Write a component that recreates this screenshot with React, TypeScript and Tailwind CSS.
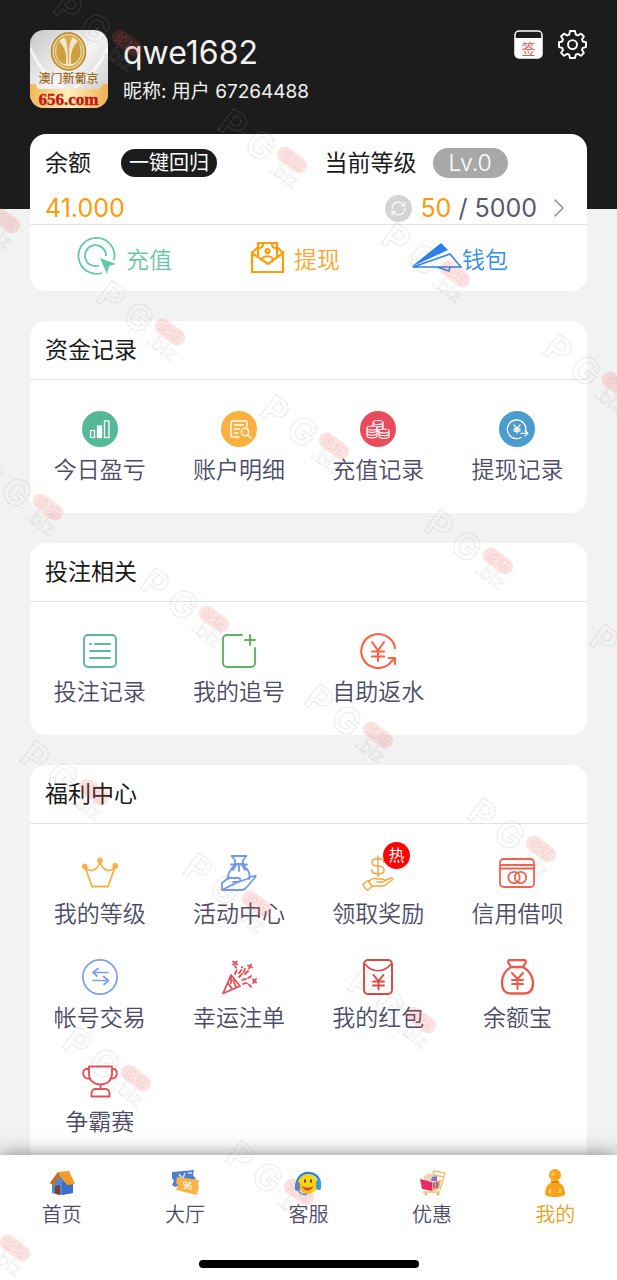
import { ReactNode } from 'react';
import { ChevronRight, RefreshCw } from 'lucide-react';

type Entry = { label: string; icon: ReactNode; hot?: boolean };

const svgProps = { width: 36, height: 36, viewBox: '0 0 36 36', fill: 'none', strokeLinecap: 'round', strokeLinejoin: 'round' } as const;

const funds: Entry[] = [
    {
        label: '今日盈亏',
        icon: (
            <svg {...svgProps}>
                <circle cx="18" cy="18" r="18" fill="#55b896" />
                <g stroke="#fff" strokeWidth="1.3" strokeLinecap="butt" strokeLinejoin="miter">
                    <rect x="8.5" y="19.5" width="4" height="7" />
                    <rect x="15.5" y="15" width="4" height="11.5" fill="#fff" />
                    <rect x="22.5" y="10" width="4.5" height="16.5" />
                </g>
            </svg>
        ),
    },
    {
        label: '账户明细',
        icon: (
            <svg {...svgProps}>
                <circle cx="18" cy="18" r="18" fill="#fcb040" />
                <g stroke="#fff" strokeWidth="1.4">
                    <path d="M26 16V11.500a1.500 1.500 0 0 0-1.500-1.500H11.500A1.500 1.500 0 0 0 10 11.500v13a1.500 1.500 0 0 0 1.500 1.500H18M13.500 14h9M13.500 18h5M13.500 22h3" />
                    <circle cx="24" cy="21" r="3.700" />
                    <path d="m27 24 3 3" />
                </g>
            </svg>
        ),
    },
    {
        label: '充值记录',
        icon: (
            <svg {...svgProps}>
                <circle cx="18" cy="18" r="18" fill="#ea4b5a" />
                <g stroke="#fff" strokeWidth="1.1" fill="#ea4b5a">
                    <path d="M13 11.500v9h10v-9" />
                    <path d="M13 14c1 2.500 9 2.500 10 0M13 17c1 2.500 9 2.500 10 0" />
                    <ellipse cx="18" cy="11.500" rx="5" ry="2" />
                    <path d="M7 17v8c1 2.500 9 2.500 10 0v-8" />
                    <path d="M7 19.500c1 2.500 9 2.500 10 0M7 22.300c1 2.500 9 2.500 10 0" />
                    <ellipse cx="12" cy="17" rx="5" ry="2" />
                    <path d="M19 20v5.500c1 2.500 9 2.500 10 0V20" />
                    <path d="M19 22.700c1 2.500 9 2.500 10 0" />
                    <ellipse cx="24" cy="20" rx="5" ry="2" />
                </g>
            </svg>
        ),
    },
    {
        label: '提现记录',
        icon: (
            <svg {...svgProps}>
                <circle cx="18" cy="18" r="18" fill="#4a9bce" />
                <g stroke="#fff" strokeWidth="1.3">
                    <path d="M26.800 20A9.300 9.300 0 1 0 22 26.500M22 22.300h6.500M26 19.500l2.800 2.800-2.800 2.800" />
                    <path d="m15 14 3 3.500 3-3.500M18 17.500V22M15 18h6M15 20h6" />
                </g>
            </svg>
        ),
    },
];

const bets: Entry[] = [
    {
        label: '投注记录',
        icon: (
            <svg {...svgProps} stroke="#5cba9b" strokeWidth="1.9">
                <rect x="2" y="2" width="32" height="32" rx="4" />
                <path d="M8 11h1M13 11h15M8 18h20M8 25h20" />
            </svg>
        ),
    },
    {
        label: '我的追号',
        icon: (
            <svg {...svgProps} stroke="#5cb65a" strokeWidth="1.9">
                <path d="M21 2H6a4 4 0 0 0-4 4v24a4 4 0 0 0 4 4h24a4 4 0 0 0 4-4V15" />
                <path d="M29 2v10M24 7h10" />
            </svg>
        ),
    },
    {
        label: '自助返水',
        icon: (
            <svg {...svgProps} className="overflow-visible" stroke="#fb6242" strokeWidth="2.1">
                <path d="M35 15A17 17 0 1 0 28 32M28 32l7-7M28.500 25h6.500v6" />
                <path d="m12 9 6 8.500L24 9M18 17.500V28M12 18.500h12M12 23.500h12" />
            </svg>
        ),
    },
];

const welfare: Entry[] = [
    {
        label: '我的等级',
        icon: (
            <svg {...svgProps} stroke="#fcb040" strokeWidth="1.800">
                <path d="M3 12l7 19.500h16L33 12c-5 6-12 4-15-5-3 9-10 11-15 5z" />
                <g fill="#fcb040"><circle cx="2.800" cy="11.500" r="2" /><circle cx="18" cy="5.500" r="2" /><circle cx="33.200" cy="11" r="2" /></g>
            </svg>
        ),
    },
    {
        label: '活动中心',
        icon: (
            <svg {...svgProps} stroke="#7199ee" strokeWidth="1.800">
                <path d="M10.500 1h15l-3.500 4v4h-8V5zM10 9.500h16M14 10c-5 5-8 9-7 14M22 10c5 5 8 8 6 14M15 10l-3 5M18 10v6M21 10l3 5" />
                <path d="M1 35V28l6-5h10c3 0 3 4 0 4h-5M17 27l9-3 5-2.500c3-1 5-1 3 1L25 33c-1 1-3 2-5 2H1z" />
            </svg>
        ),
    },
    {
        label: '领取奖励',
        hot: true,
        icon: (
            <svg {...svgProps} stroke="#f4a843" strokeWidth="1.500">
                <path d="M24 7.500C23.500 5 21 3.500 18 3.500c-8 0-8 7.500 0 7.500 8 0 8 8 0 8-3.500 0-6-1.500-6.500-4M18 1v20.500" />
                <path d="M9 26c3-3 6-3 9-2h5c2.500 0 2 3-.5 3H17M24 26l6-2.500c2-1 4 0 2 1.500L24 31H13l-3 2M8 25.500l4 6-4 3.500c-2 0-5-4-5-6z" />
            </svg>
        ),
    },
    {
        label: '信用借呗',
        icon: (
            <svg {...svgProps} stroke="#f0634f" strokeWidth="1.800">
                <rect x="1" y="4" width="34" height="28" rx="3.500" />
                <path d="M1 10h34M1 13.500h34" />
                <circle cx="15" cy="22.500" r="5.700" /><circle cx="21.500" cy="22.500" r="5.700" />
            </svg>
        ),
    },
    {
        label: '帐号交易',
        icon: (
            <svg {...svgProps} stroke="#7c9fee" strokeWidth="1.700">
                <circle cx="18" cy="18" r="17.100" />
                <path d="M26 13.500H11l5-4M11 13.500l4 3.500M11 21.500h15.500l-5-4M26.500 21.500l-4.500 4" />
            </svg>
        ),
    },
    {
        label: '幸运注单',
        icon: (
            <svg {...svgProps} stroke="#e84a59" strokeWidth="1.800">
                <path d="M10 16 2 34.500l17-7.500zM7 24l4 6M10 18v6M12 21l3 7" />
                <path d="M14 15c2-4 2-6 0-8M18 18c4-4 6-6 6-9M21 21c4-1 7-2 9-4M22 25c4-2 6 0 8 3M18 14c2-2 3-3 3-6" strokeDasharray="4 2.500" />
                <path d="m12 2.500 4 3M16 2.500l-4 3M27 6.500l4 2M30 5.500l-2 4M32 20.500l3 3M35 20l-3 4M24 15l3-3" />
            </svg>
        ),
    },
    {
        label: '我的红包',
        icon: (
            <svg {...svgProps} stroke="#d6473f" strokeWidth="1.900">
                <rect x="4" y="1" width="28" height="34" rx="4" />
                <path d="M5 5c7 9 19 9 26 0" strokeWidth="1.500" />
                <path d="m13.500 16 5 6 5-6M18.500 22v8.500M13 22.500h11M13 26.500h11" />
            </svg>
        ),
    },
    {
        label: '余额宝',
        icon: (
            <svg {...svgProps} stroke="#ed5a4a" strokeWidth="2.300">
                <path d="M12 8 9.500 4c-.8-1.500 0-3 1.500-3h14c1.500 0 2.300 1.500 1.500 3L24 8zM12 8C5 12 3 18 3 24c0 7 3 10.500 9 10.500h13c6 0 9-3.500 9-10.500 0-6-3-12-10-16" />
                <path d="m13 14 5.500 6 5.500-6M18.500 20v10M13 21h11M13 25h11" strokeWidth="2" />
            </svg>
        ),
    },
    {
        label: '争霸赛',
        icon: (
            <svg {...svgProps} stroke="#e94d53" strokeWidth="1.900">
                <path d="M7 3.500h23v7c0 7-5 11-11.500 11S7 17.500 7 10.500zM7 6H4C0 6 0 15.500 6 15.500h2M30 6h2c4 0 4 9.500-2 9.500h-2M18.500 21.500V26M9.500 33.500v-3c0-3 2-4.500 4-4.500h10c2 0 4 1.500 4 4.500v3z" />
            </svg>
        ),
    },
];

const tabs: Entry[] = [
    {
        label: '首页',
        icon: (
            <svg width="28" height="28" viewBox="0 0 28 28">
                <path d="M4 13 12 5l13 7v12l-13 2-8-2z" fill="#4f88d8" />
                <path d="M14 13l11-1v12l-11 2z" fill="#3a70c6" />
                <path d="M2 14 10 3l11-1 6 13-8 1-7-9-7 9z" fill="#f49b29" />
                <path d="M2 14 10 3l2 4-7 9z" fill="#c66b1d" />
                <path d="M7 17l5-1v10l-5-1.500z" fill="#803c24" />
            </svg>
        ),
    },
    {
        label: '大厅',
        icon: (
            <svg width="28" height="28" viewBox="0 0 28 28">
                <path d="M1 3l22-2-1 5 3 4-21 8-3-2 2-4-2-3z" fill="#4f7fd0" />
                <path d="M8 5l3 4M14 4l-2 5M17 4h4" stroke="#d9e6ff" strokeWidth="1.500" />
                <path d="M6 8l22 3-1 5 1 2-2 8-21-5 2-5-2-2z" fill="#f9b347" />
                <path d="m13 20 7-7" stroke="#fff" strokeWidth="1.500" />
                <circle cx="14" cy="14.500" r="1.700" fill="none" stroke="#fff" /><circle cx="19" cy="18.500" r="1.700" fill="none" stroke="#fff" />
            </svg>
        ),
    },
    {
        label: '客服',
        icon: (
            <svg width="28" height="28" viewBox="0 0 28 28">
                <path d="M3 17C1 2 24-2 26 15" fill="none" stroke="#2d88d8" strokeWidth="2.500" />
                <circle cx="14" cy="15" r="10" fill="#fbd413" />
                <rect x="1" y="13" width="5" height="9" rx="2.500" fill="#388fd9" /><rect x="22" y="11" width="5" height="10" rx="2.500" fill="#3a9be0" />
                <ellipse cx="11" cy="12" rx="1" ry="2" fill="#684316" /><ellipse cx="17" cy="12" rx="1" ry="2" fill="#684316" />
                <path d="M8 17c3 2 8 2 11 0-1 6-9 6-11 0z" fill="#d74938" />
                <path d="M4 21c2 4 6 5 9 4" fill="none" stroke="#388fd9" strokeWidth="1.500" />
            </svg>
        ),
    },
    {
        label: '优惠',
        icon: (
            <svg width="28" height="28" viewBox="0 0 28 28" fill="none">
                <path d="M6 10V7l5-3 7 3v5H7z" fill="#f0d3b4" />
                <path d="m14 8 5-1v5h-6z" fill="#8b6ddd" />
                <path d="m2 10 12 3v9l-10-2z" fill="#e52e65" />
                <path d="m14 13 9-2-2 9-7 2z" fill="#f4a24d" />
                <path d="m16 14 0 5M19 13v6" stroke="#6b5be0" strokeWidth="1.500" />
                <path d="M16 2l11 2-5 17M5 23h17M15 2l1 5M26 8l-10-2" stroke="#f0bd74" strokeWidth="1.400" />
                <circle cx="8" cy="25" r="1.600" fill="#f2b35c" /><circle cx="20" cy="25" r="1.600" fill="#f2b35c" />
            </svg>
        ),
    },
    {
        label: '我的',
        icon: (
            <svg width="28" height="28" viewBox="0 0 28 28">
                <path d="M4 25c0-7 3-12 10-12s10 5 10 12c0 4-20 4-20 0z" fill="#f7a418" />
                <ellipse cx="14" cy="12.800" rx="4.500" ry="1.200" fill="#d77f0b" />
                <circle cx="14" cy="6" r="6" fill="#f9a51b" />
                <ellipse cx="12" cy="5" rx="2" ry="1.500" fill="#ffc766" />
                <path d="M9 20v4M19 20v4" stroke="#ffe1a4" strokeWidth="1.500" />
            </svg>
        ),
    },
];

// centre of the red pill in each watermark
const marks = [
    [127, 43], [292, 160], [5, 220], [455, 274], [170, 332], [617, 385], [334, 446], [48, 507], [498, 561], [214, 619],
    [663, 675], [378, 735], [94, 792], [541, 849], [257, 904], [421, 1020], [136, 1078], [299, 1192], [15, 1248],
];

export default function App() {
    return (
        <div className="relative flex h-screen flex-col overflow-hidden bg-[#f2f2f2] font-[Inter,'Noto_Sans_CJK_SC',sans-serif] text-[#1a1a1a]">
            <main className="min-h-0 flex-1 overflow-y-auto [scrollbar-width:none]">
                <header className="flex items-start bg-[#1c1c1c] px-[30px] pt-[30px] pb-[101px] text-[#f2f2f2]">
                    <Avatar />
                    <div className="ml-[15px] flex-1">
                        <h1 className="mt-1 text-[32px] leading-[38px]">qwe1682</h1>
                        <p className="mt-1 text-[19px] leading-[32px]">昵称: 用户 67264488</p>
                    </div>
                    <div className="flex gap-[15px]">
                        <button aria-label="签到">
                            <svg width="29" height="29" viewBox="0 0 29 29">
                                <rect x="1" y="1" width="27" height="27" rx="4" fill="none" stroke="#fff" strokeWidth="1.500" />
                                <path d="M1 8h27v16a4 4 0 0 1-4 4H5a4 4 0 0 1-4-4z" fill="#fff" />
                                <text x="14.500" y="23.500" textAnchor="middle" fontSize="14" fill="#e2584b">签</text>
                            </svg>
                        </button>
                        <button aria-label="设置">
                            <svg width="29" height="29" viewBox="0 0 29 29" fill="none" stroke="#fff" strokeWidth="1.900" strokeLinejoin="round">
                                <path d="M12 1h5l.8 3.600 2 .9L23 3.600 25.900 6.500 24 9.500l.8 2 3.200.7v4.900l-3.200.8-.8 2 1.900 3-2.900 2.900-3.200-1.900-2 .8L17 28h-5l-.8-3.300-2-.8L6 25.800 3.100 22.900 5 19.900l-.8-2L1 17.100v-4.900l3.200-.7.8-2-1.900-3L6 3.600l3.200 1.900 2-.9z" />
                                <circle cx="14.500" cy="14.600" r="4.500" />
                            </svg>
                        </button>
                    </div>
                </header>

                <section className="mx-[30px] -mt-[75px] rounded-2xl bg-white">
                    <div className="grid h-[91px] grid-cols-2 border-b border-[#e2e2e2] text-[23px]">
                        <div className="px-[15px]">
                            <div className="flex h-[58px] items-center gap-[30px]">
                                <span>余额</span>
                                <button className="h-7 rounded-full bg-[#1c1c1c] px-2 text-[20px] leading-7 text-white">一键回归</button>
                            </div>
                            <p className="text-[25px] leading-[32px] text-[#fd9b08]">41.000</p>
                        </div>
                        <div className="px-4">
                            <div className="flex h-[58px] items-center gap-4">
                                <span>当前等级</span>
                                <span className="h-[30px] rounded-full bg-[#a8a8a8] px-4 leading-[30px] font-light text-white">Lv.0</span>
                            </div>
                            <div className="flex items-center justify-end text-[25px] leading-[32px] text-[#585872]">
                                <button aria-label="刷新" className="mr-2 flex size-[27px] items-center justify-center rounded-full bg-[#d4d4d4] text-white">
                                    <RefreshCw size={17} strokeWidth={1.5} />
                                </button>
                                <span><span className="text-[#fd9b08]">50</span> / 5000</span>
                                <ChevronRight size={32} strokeWidth={1} className="-mr-1 ml-1.5 text-[#888]" />
                            </div>
                        </div>
                    </div>
                    <div className="flex h-[66px] items-center gap-[72px] pt-1 pl-[46px] text-[23px] font-[350]">
                        <button className="flex items-center gap-2 text-[#6cc6a5]">
                            <svg width="42" height="42" viewBox="0 3 42 42" fill="none" stroke="#60c9a5" strokeWidth="1.800" className="overflow-visible">
                                <path d="M38 24A18 18 0 1 0 26 37M30 20a10.500 10.500 0 1 0-7 9.500" />
                                <path d="m24 22 16 6-7 2-2 8z" fill="#60c9a5" stroke="none" />
                            </svg>
                            充值
                        </button>
                        <button className="flex items-center gap-2 text-[#fba62c]">
                            <svg width="42" height="42" viewBox="0 3 42 42" fill="none" stroke="#ff9c0a" strokeWidth="2.200">
                                <path d="M8 17v19h31V17L24 28zM8 17l6-6M39 17l-6-6M14 22V7h19v15" />
                                <circle cx="23.500" cy="15" r="2" /><path d="M15 12c3 0 4-2 4-4M32 12c-3 0-4-2-4-4M18 24c0-5 11-5 11 0" />
                            </svg>
                            提现
                        </button>
                        <button className="flex items-center gap-2 text-[#318cec]">
                            <svg width="42" height="42" viewBox="0 3 42 42" fill="none" stroke="#2881e9" strokeWidth="1.500" className="overflow-visible">
                                <path d="m-1 31 30-24 7 7z" fill="#2881e9" stroke="none" />
                                <path d="m1 31 37-13 11 13zM25 31l12 4 1-4" />
                            </svg>
                            钱包
                        </button>
                    </div>
                </section>

                <Panel title="资金记录" items={funds} />
                <Panel title="投注相关" items={bets} />
                <Panel title="福利中心" items={welfare} />
                <div className="h-[30px]" />
            </main>

            <nav className="relative bg-white pb-3 shadow-[0_0_18px_rgba(0,0,0,0.5)]">
                <div className="grid grid-cols-5 pt-[14px]">
                    {tabs.map(tab => (
                        <a
                            key={tab.label}
                            href="#"
                            className={`flex flex-col items-center gap-1 text-[20px] leading-7 font-[350] ${tab.label === '我的' ? 'text-[#dfa51d]' : 'text-[#4c4c68]'}`}
                        >
                            {tab.icon}
                            {tab.label}
                        </a>
                    ))}
                </div>
                <div className="mx-auto mt-[31px] h-2 w-[220px] rounded-full bg-black" />
            </nav>

            <Watermarks />
        </div>
    );
}

function Panel({ title, items }: { title: string; items: Entry[] }) {
    return (
        <section className="mx-[30px] mt-[30px] rounded-2xl bg-white">
            <h2 className="border-b border-[#e2e2e2] px-[15px] text-[23px] leading-[58px]">{title}</h2>
            <div className="grid grid-cols-4 gap-y-[30px] pt-[31px] pb-7">
                {items.map(item => (
                    <button key={item.label} className="flex flex-col items-center gap-2 text-[23px] leading-[30px] font-[350] text-[#4c4c68]">
                        <span className="relative">
                            {item.icon}
                            {item.hot && (
                                <span className="absolute -top-[13px] left-[23px] size-[27px] rounded-full bg-[#fd0505] text-center text-[16px] leading-[27px] font-normal text-white">热</span>
                            )}
                        </span>
                        {item.label}
                    </button>
                ))}
            </div>
        </section>
    );
}

function Avatar() {
    return (
        <svg width="78" height="78" viewBox="0 0 78 78" className="rounded-[14px]">
            <defs>
                <linearGradient id="silver" x1="0" y1="0" x2="1" y2="1">
                    <stop offset="0" stopColor="#c8c8c8" /><stop offset=".5" stopColor="#f4f4f4" /><stop offset="1" stopColor="#c4c4c4" />
                </linearGradient>
                <linearGradient id="gold" x1="0" y1="0" x2="1" y2="0">
                    <stop offset="0" stopColor="#f2b75a" /><stop offset=".5" stopColor="#fff0b8" /><stop offset="1" stopColor="#eeb04f" />
                </linearGradient>
            </defs>
            <rect width="78" height="78" fill="url(#silver)" />
            <path d="M0 18c9 20 20 32 34 40M78 18C68 38 58 50 44 58" stroke="#fff" strokeWidth="3" fill="none" opacity=".7" />
            <path d="M0 54h6c0 3 2 5 5 5h56c3 0 5-2 5-5h6v24H0z" fill="url(#gold)" />
            <ellipse cx="38.500" cy="21.500" rx="17" ry="18.500" fill="#e9d49b" stroke="#b98222" strokeWidth="1.500" />
            <ellipse cx="38.500" cy="21.500" rx="14" ry="15.500" fill="#efe6cc" stroke="#d6a640" strokeWidth="1.500" />
            <path d="M36 34C24 33 25 17 29 11c6 7 8 12 7 23zM41 34c12-1 11-17 7-23-6 7-8 12-7 23z" fill="#cf9f42" />
            <path d="M34 7c3 4 4 8 4 27h1c0-19 1-23 4-27-3-1-6-1-9 0z" fill="#d9ac4a" />
            <text x="38.500" y="53" textAnchor="middle" fontSize="12" fontWeight="500" fill="#9a6a1c" className="font-['Noto_Sans_CJK_SC',sans-serif]">澳门新葡京</text>
            <text x="38.500" y="75" textAnchor="middle" fontSize="17" fontWeight="700" fill="#c4161c" stroke="#c4161c" strokeWidth=".4" className="font-['Liberation_Serif',serif]">656.com</text>
        </svg>
    );
}

function Watermarks() {
    return (
        <svg aria-hidden="true" width="100%" height="100%" className="pointer-events-none absolute inset-0">
            {marks.map(([x, y]) => (
                <g key={`${x}-${y}`} transform={`translate(${x} ${y}) rotate(37)`}>
                    <g fill="none" stroke="#999" strokeOpacity=".42" strokeWidth="1" strokeDasharray="1 1" fontWeight="700" textAnchor="middle">
                        <text x="-68" y="20" fontSize="36">P</text>
                        <text x="-34" y="20" fontSize="36">G</text>
                        <text x="3" y="23" fontSize="19" fontWeight="400" strokeOpacity=".3">.biz</text>
                    </g>
                    <rect x="-17" y="-8" width="34" height="16" rx="8" fill="#f04848" fillOpacity=".16" />
                    <text y="5" fontSize="13" textAnchor="middle" fill="#b99" fillOpacity=".2">论坛</text>
                </g>
            ))}
        </svg>
    );
}
